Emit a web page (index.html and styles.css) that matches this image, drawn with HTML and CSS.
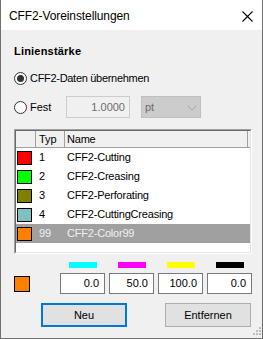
FILE: index.html
```html
<!DOCTYPE html>
<html lang="de">
<head>
<meta charset="utf-8">
<title>CFF2-Voreinstellungen</title>
<link rel="stylesheet" href="styles.css">
</head>
<body>
<div class="window">
  <div class="titlebar">
    <span class="title">CFF2-Voreinstellungen</span>
    <svg class="close" width="11" height="11" viewBox="0 0 11 11"><path d="M0.5 0.5 L10.5 10.5 M10.5 0.5 L0.5 10.5" stroke="#000" stroke-width="1.1" fill="none"/></svg>
  </div>
  <div class="content">
    <div class="heading">Linienstärke</div>
    <div class="radio-row first">
      <span class="radio checked"></span>
      <span class="label">CFF2-Daten übernehmen</span>
    </div>
    <div class="radio-row second">
      <span class="radio"></span>
      <span class="label fest">Fest</span>
      <div class="num-input">1.0000</div>
      <div class="select"><span>pt</span><svg width="10" height="6" viewBox="0 0 10 6"><path d="M0.5 0.5 L5 5 L9.5 0.5" stroke="#a8a8a8" stroke-width="1" fill="none"/></svg></div>
    </div>
    <div class="list">
      <div class="list-inner">
        <div class="lrow header">
          <div class="cell c0"></div>
          <div class="cell c1">Typ</div>
          <div class="cell c2">Name</div>
        </div>
        <div class="lrow">
          <div class="cell c0"><span class="sw red"></span></div>
          <div class="cell c1">1</div>
          <div class="cell c2">CFF2-Cutting</div>
        </div>
        <div class="lrow">
          <div class="cell c0"><span class="sw green"></span></div>
          <div class="cell c1">2</div>
          <div class="cell c2">CFF2-Creasing</div>
        </div>
        <div class="lrow">
          <div class="cell c0"><span class="sw olive"></span></div>
          <div class="cell c1">3</div>
          <div class="cell c2">CFF2-Perforating</div>
        </div>
        <div class="lrow">
          <div class="cell c0"><span class="sw teal"></span></div>
          <div class="cell c1">4</div>
          <div class="cell c2">CFF2-CuttingCreasing</div>
        </div>
        <div class="lrow selected">
          <div class="cell c0"><span class="sw orange"></span></div>
          <div class="cell c1">99</div>
          <div class="cell c2">CFF2-Color99</div>
        </div>
      </div>
    </div>
    <div class="cmyk">
      <div class="bars">
        <span class="bar cyan"></span>
        <span class="bar magenta"></span>
        <span class="bar yellow"></span>
        <span class="bar black"></span>
      </div>
      <div class="values">
        <span class="big-sw"></span>
        <div class="val">0.0</div>
        <div class="val">50.0</div>
        <div class="val">100.0</div>
        <div class="val">0.0</div>
      </div>
    </div>
    <div class="buttons">
      <div class="btn primary">Neu</div>
      <div class="btn">Entfernen</div>
    </div>
  </div>
  <svg class="grip" width="10" height="10" viewBox="0 0 10 10">
    <rect x="8" y="0" width="2" height="2" fill="#bcbcbc"/>
    <rect x="5" y="3" width="2" height="2" fill="#bcbcbc"/>
    <rect x="8" y="3" width="2" height="2" fill="#bcbcbc"/>
    <rect x="2" y="6" width="2" height="2" fill="#bcbcbc"/>
    <rect x="5" y="6" width="2" height="2" fill="#bcbcbc"/>
    <rect x="8" y="6" width="2" height="2" fill="#bcbcbc"/>
  </svg>
</div>
</body>
</html>
```

FILE: styles.css
```css
* { box-sizing: border-box; }
html, body { margin: 0; padding: 0; }
body {
  width: 263px;
  height: 339px;
  overflow: hidden;
  font-family: "Liberation Sans", Arial, sans-serif;
  font-size: 11px;
  color: #000;
  background: #fff;
}
.window {
  position: relative;
  width: 263px;
  height: 339px;
  display: flex;
  flex-direction: column;
  border-left: 1px solid #707070;
  border-right: 1px solid #707070;
  border-bottom: 1px solid #707070;
  background: #f0f0f0;
}
.titlebar {
  height: 30px;
  flex: none;
  background: #fff;
  display: flex;
  align-items: center;
  justify-content: space-between;
  padding: 0 9px 0 8px;
}
.title {
  font-size: 12px;
  line-height: 30px;
  padding-top: 1px;
  letter-spacing: -0.1px;
}
.close { margin-top: 2px; }
.content {
  flex: 1;
  display: flex;
  flex-direction: column;
  padding-left: 13px;
}
.heading {
  font-weight: bold;
  line-height: 13px;
  margin-top: 15px;
  letter-spacing: 0.2px;
}
.radio-row {
  display: flex;
  align-items: center;
}
.radio-row.first { margin-top: 14px; height: 13px; }
.radio-row.second { margin-top: 11px; height: 22px; }
.radio {
  width: 13px;
  height: 13px;
  border: 1px solid #333;
  border-radius: 50%;
  background: #fff;
  margin-right: 3px;
  display: flex;
  align-items: center;
  justify-content: center;
  flex: none;
}
.radio.checked::after {
  content: "";
  width: 7px;
  height: 7px;
  border-radius: 50%;
  background: #333;
}
.label { line-height: 13px; }
.first .label { letter-spacing: -0.3px; }
.fest { width: 36px; }
.num-input {
  width: 64px;
  height: 22px;
  background: #f0f0f0;
  border: 1px solid #cccccc;
  color: #6d6d6d;
  text-align: right;
  padding-right: 4px;
  line-height: 20px;
}
.select {
  width: 60px;
  height: 22px;
  margin-left: 11px;
  background: #cccccc;
  border: 1px solid #bfbfbf;
  color: #6d6d6d;
  display: flex;
  align-items: center;
  justify-content: space-between;
  padding: 0 3px 0 3px;
  line-height: 20px;
}
.select svg { margin-top: 1px; }
.list {
  margin-top: 11px;
  width: 238px;
  height: 125px;
  border: 1px solid;
  border-color: #a0a0a0 #ffffff #ffffff #a0a0a0;
}
.list-inner {
  width: 100%;
  height: 100%;
  background: #fff;
  border: 1px solid;
  border-color: #696969 #e3e3e3 #e3e3e3 #696969;
}
.lrow {
  display: grid;
  grid-template-columns: 20px 29px 183px;
  height: 19px;
  align-items: center;
}
.lrow.header {
  height: 17px;
  background: #f0f0f0;
  border-bottom: 1px solid #a0a0a0;
}
.header .cell {
  height: 100%;
  border-right: 1px solid #a0a0a0;
  display: flex;
  align-items: center;
}
.cell { line-height: 13px; white-space: nowrap; }
.c1 { padding-left: 3px; }
.c2 { padding-left: 2px; letter-spacing: -0.2px; }
.c0 { display: flex; align-items: center; }
.lrow.selected { background: #a0a0a0; color: #f0f0f0; }
.sw {
  width: 15px;
  height: 14px;
  margin-left: 1px;
  border: 1px solid #000;
  display: block;
}
.red { background: #ff0000; }
.green { background: #00ff00; }
.olive { background: #808000; }
.teal { background: #80c0c0; }
.orange { background: #ff8000; }
.cmyk { margin-top: 8px; }
.bars {
  display: grid;
  grid-template-columns: repeat(4, 45px);
  column-gap: 4px;
  padding-left: 46px;
  justify-items: center;
}
.bar { width: 28px; height: 6px; display: block; }
.cyan { background: #00ffff; }
.magenta { background: #ff00ff; }
.yellow { background: #ffff00; }
.black { background: #000; }
.values {
  margin-top: 5px;
  display: grid;
  grid-template-columns: 42px repeat(4, 45px);
  column-gap: 4px;
  align-items: center;
}
.big-sw {
  width: 16px;
  height: 16px;
  border: 1px solid #000;
  background: #ff8000;
  display: block;
}
.val {
  width: 45px;
  height: 21px;
  border: 1px solid #7a7a7a;
  background: #fff;
  text-align: right;
  padding-right: 5px;
  line-height: 19px;
}
.buttons {
  margin-top: 9px;
  display: flex;
  padding-left: 27px;
  gap: 38px;
}
.btn {
  width: 86px;
  height: 24px;
  background: #e1e1e1;
  border: 1px solid #adadad;
  display: flex;
  align-items: center;
  justify-content: center;
}
.btn.primary { border: 2px solid #0078d7; }
.grip {
  position: absolute;
  right: 1px;
  bottom: 1px;
}
```
